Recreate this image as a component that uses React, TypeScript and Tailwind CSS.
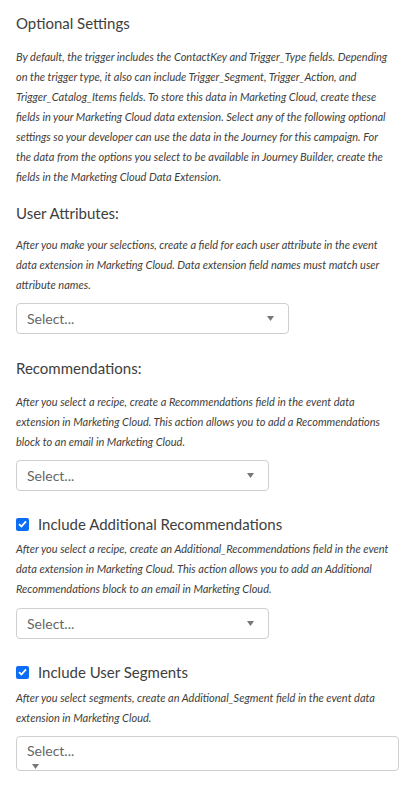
import React from "react";

const font = { fontFamily: "Lato, 'Open Sans', sans-serif" };

function Lines({ lines, className = "" }: { lines: string[]; className?: string }) {
  return (
    <p className={"text-[11px] italic leading-[20px] text-[#3e3e3c] " + className}>
      {lines.map((l, i) => (
        <span key={i} className="block whitespace-nowrap">
          {l}
        </span>
      ))}
    </p>
  );
}

function Arrow() {
  return (
    <svg width="7" height="5" viewBox="0 0 7 5" className="block">
      <path d="M0 0 H7 L3.5 5 Z" fill="#777" />
    </svg>
  );
}

function Select({ w, className = "" }: { w: string; className?: string }) {
  return (
    <div
      className={
        "flex h-[31px] items-center justify-between rounded-[4px] border border-[#cfcfcf] bg-white pl-[10px] pr-[14px] " +
        w +
        " " +
        className
      }
    >
      <span className="text-[14px] text-[#666]">Select...</span>
      <Arrow />
    </div>
  );
}

function Check({ label, className = "" }: { label: string; className?: string }) {
  return (
    <div className={"flex h-[20px] items-center " + className}>
      <span className="flex h-[13px] w-[13px] items-center justify-center rounded-[2px] bg-[#0b6cf5]">
        <svg width="9" height="8" viewBox="0 0 9 8">
          <path d="M1 4.2 L3.4 6.5 L8 1.3" stroke="#fff" strokeWidth="1.8" fill="none" />
        </svg>
      </span>
      <span className="ml-[9px] text-[15px] text-[#3e3e3c]">{label}</span>
    </div>
  );
}

export default function App() {
  return (
    <div className="min-h-[811px] w-[416px] bg-white px-4 pt-[13px]" style={font}>
      <h2 className="text-[15px] leading-[20px] text-[#3e3e3c]">Optional Settings</h2>
      <Lines
        className="mt-[14px]"
        lines={[
          "By default, the trigger includes the ContactKey and Trigger_Type fields. Depending",
          "on the trigger type, it also can include Trigger_Segment, Trigger_Action, and",
          "Trigger_Catalog_Items fields. To store this data in Marketing Cloud, create these",
          "fields in your Marketing Cloud data extension. Select any of the following optional",
          "settings so your developer can use the data in the Journey for this campaign. For",
          "the data from the options you select to be available in Journey Builder, create the",
          "fields in the Marketing Cloud Data Extension.",
        ]}
      />

      <h3 className="mt-[16px] text-[15px] leading-[20px] text-[#3e3e3c]">User Attributes:</h3>
      <Lines
        className="mt-[12px]"
        lines={[
          "After you make your selections, create a field for each user attribute in the event",
          "data extension in Marketing Cloud. Data extension field names must match user",
          "attribute names.",
        ]}
      />
      <Select w="w-[273px]" className="mt-[8px]" />

      <h3 className="mt-[24px] text-[15px] leading-[20px] text-[#3e3e3c]">Recommendations:</h3>
      <Lines
        className="mt-[14px]"
        lines={[
          "After you select a recipe, create a Recommendations field in the event data",
          "extension in Marketing Cloud. This action allows you to add a Recommendations",
          "block to an email in Marketing Cloud.",
        ]}
      />
      <Select w="w-[253px]" className="mt-[8px]" />

      <Check label="Include Additional Recommendations" className="mt-[23px]" />
      <Lines
        className="mt-[5px]"
        lines={[
          "After you select a recipe, create an Additional_Recommendations field in the event",
          "data extension in Marketing Cloud. This action allows you to add an Additional",
          "Recommendations block to an email in Marketing Cloud.",
        ]}
      />
      <Select w="w-[253px]" className="mt-[9px]" />

      <Check label="Include User Segments" className="mt-[23px]" />
      <Lines
        className="mt-[6px]"
        lines={[
          "After you select segments, create an Additional_Segment field in the event data",
          "extension in Marketing Cloud.",
        ]}
      />
      <div className="mt-[8px] h-[35px] w-[383px] rounded-[4px] border border-[#cfcfcf] bg-white pl-[10px] pt-[6px]">
        <div className="text-[14px] leading-[16px] text-[#666]">Select...</div>
        <div className="ml-[5px] mt-[5px]">
          <Arrow />
        </div>
      </div>
    </div>
  );
}
